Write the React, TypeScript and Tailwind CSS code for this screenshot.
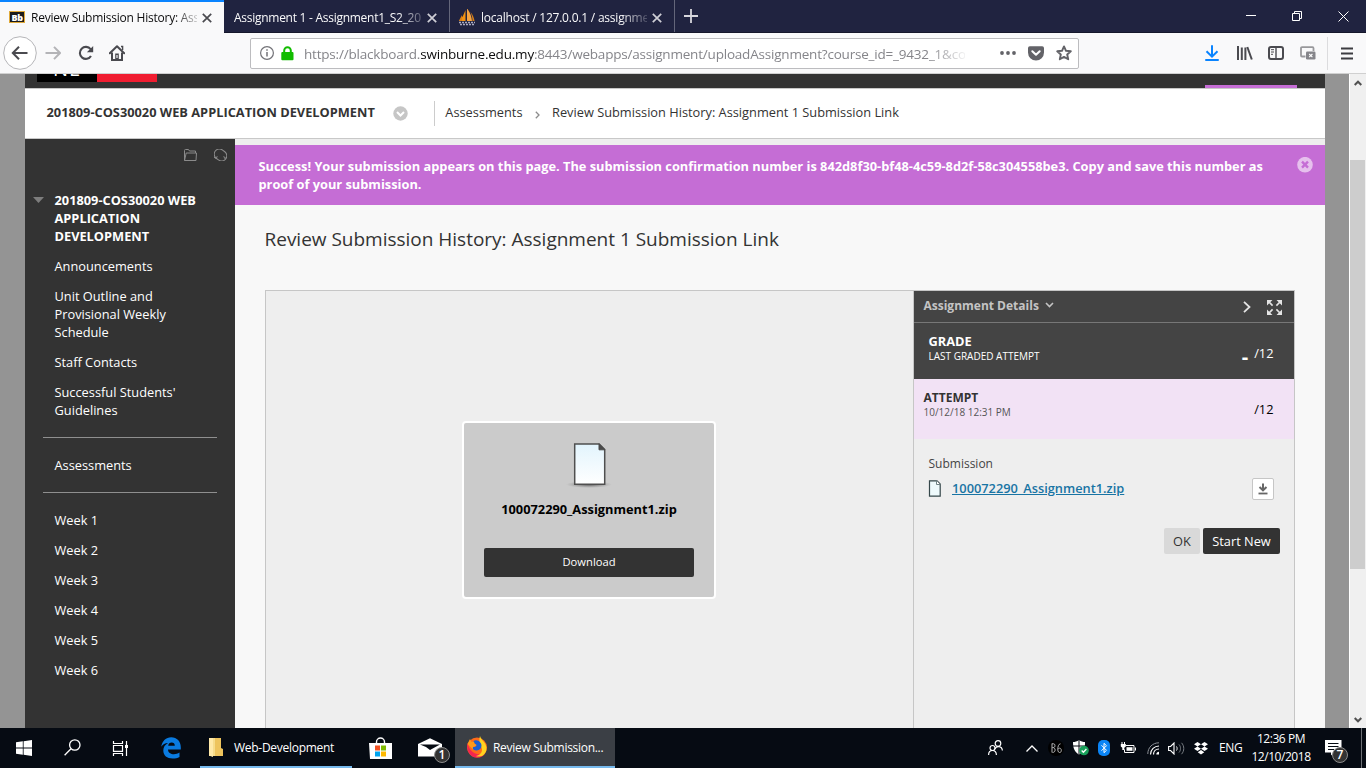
import type { ReactNode } from "react";

type IconProps = { w: number; h: number; className?: string; children: ReactNode };

function Icon({ w, h, className = "", children }: IconProps) {
  return (
    <svg width={w} height={h} viewBox={`0 0 ${w} ${h}`} fill="none" className={`block shrink-0 ${className}`}>
      {children}
    </svg>
  );
}

function CloseX({ color, className = "" }: { color: string; className?: string }) {
  return (
    <Icon w={10} h={10} className={className}>
      <path d="M.8.8l8.4 8.4M9.2.8L.8 9.2" stroke={color} strokeWidth="1.7" />
    </Icon>
  );
}

function TabBar() {
  return (
    <div className="flex h-[33px] w-full shrink-0 border-b border-[#15172b] bg-[#202340] text-[12px] leading-[18px]">
      <div className="flex h-[33px] w-[224px] shrink-0 items-center border-t-2 border-[#0a84ff] bg-[#f9f9fa] pl-[9px] text-[#0c0c0d]">
        <div className="-mt-px flex h-[12px] w-[16px] items-center justify-center border border-[#e0aa3a] bg-[#1b1b1b] font-['Noto_Sans'] text-[9px] font-black leading-none tracking-[-0.5px] text-white">
          Bb
        </div>
        <div className="ml-[6px] w-[166px] overflow-hidden whitespace-nowrap tracking-[-0.24px] [mask-image:linear-gradient(to_right,black_143px,transparent_172px)]">
          Review Submission History: Ass
        </div>
        <CloseX color="#4a4a4f" className="ml-[5px]" />
      </div>
      <div className="flex h-[32px] w-[226px] shrink-0 items-center border-r border-[#64667a] pl-[10px] pt-[3px] text-[#f9f9fa]">
        <div className="w-[188px] overflow-hidden whitespace-nowrap tracking-[-0.27px] [mask-image:linear-gradient(to_right,black_164px,transparent_196px)]">
          Assignment 1 - Assignment1_S2_20
        </div>
        <CloseX color="#cfcfd6" className="ml-[5px]" />
      </div>
      <div className="flex h-[32px] w-[225px] shrink-0 items-center border-r border-[#64667a] pl-[8px] pt-[3px] text-[#f9f9fa]">
        <Icon w={18} h={17}>
          <path d="M7.500 1v11h-6C4 9 6 5 7.500 1z" fill="#f29111" />
          <path d="M9.500 0c3 4 4 8 4.500 12H9V0z" fill="#f7a440" />
          <path d="M4 6v6H.8L4 6zM12.500 3c2.500 3 3.500 6 4 9h-2c0-3-.8-6-2-9z" fill="#d97f16" />
          <path d="M1 13.500h16M2 15.500h14" stroke="#a9a9c0" strokeWidth="1.400" strokeDasharray="2 1" />
        </Icon>
        <div className="ml-[5px] w-[166px] overflow-hidden whitespace-nowrap tracking-[-0.22px] [mask-image:linear-gradient(to_right,black_140px,transparent_172px)]">
          localhost / 127.0.0.1 / assignme
        </div>
        <CloseX color="#cfcfd6" className="ml-[5px]" />
      </div>
      <Icon w={14} h={14} className="ml-[9px] mt-[9px]">
        <path d="M7 0v14M0 7h14" stroke="#d6d6dc" strokeWidth="1.8" />
      </Icon>
      <div className="ml-auto flex items-center pr-[17px]">
        <Icon w={10} h={10}>
          <path d="M0 4.500h10" stroke="#fff" />
        </Icon>
        <Icon w={10} h={10} className="ml-[36px]">
          <path d="M.5 2.500h7v7h-7zM2.500 2.500v-2h7v7h-2" stroke="#fff" />
        </Icon>
        <Icon w={11} h={11} className="ml-[36px]">
          <path d="M.5.5l10 10M10.500.5l-10 10" stroke="#fff" />
        </Icon>
      </div>
    </div>
  );
}

function Toolbar() {
  return (
    <div className="flex h-[41px] w-full shrink-0 items-center border-b border-[#d0d0d0] bg-[#f9f9fa] pl-[3px]">
      <Icon w={34} h={34}>
        <circle cx="17" cy="17" r="16.3" fill="#fff" stroke="#b5b5b8" />
        <path d="M24.5 17H10M16 10.8L9.8 17l6.2 6.2" stroke="#4a4a4f" strokeWidth="2" />
      </Icon>
      <Icon w={16} h={14} className="ml-[8px]">
        <path d="M.5 7H15M9 .9L15 7l-6 6.1" stroke="#b4b4b7" strokeWidth="2" />
      </Icon>
      <Icon w={16} h={16} className="ml-[17px]">
        <path d="M12.6 4.2A6 6 0 1 0 13 11" stroke="#4a4a4f" strokeWidth="2.1" />
        <path d="M15.2 1v6.3H8.9z" fill="#4a4a4f" />
      </Icon>
      <Icon w={16} h={16} className="ml-[15px]">
        <path d="M.8 8.2L8 1.2l7.2 7" stroke="#4a4a4f" strokeWidth="2" strokeLinejoin="round" strokeLinecap="round" />
        <path d="M3 7.5V15h10V7.5" stroke="#4a4a4f" strokeWidth="2" />
        <path d="M6.2 8.5h3.6V15H6.2z" fill="#4a4a4f" />
        <path d="M8 10v3" stroke="#f9f9fa" strokeWidth="1.2" />
        <path d="M12 1.5h1.6V5" stroke="#4a4a4f" strokeWidth="1.4" />
      </Icon>
      <div className="ml-[125px] flex h-[31px] w-[829px] shrink-0 items-center rounded-[2px] border border-[#bcbcbf] bg-white pl-[9px]">
        <Icon w={14} h={14}>
          <circle cx="7" cy="7" r="6.4" stroke="#737378" strokeWidth="1.2" />
          <path d="M7 6v4.500M7 3.300v1.500" stroke="#737378" strokeWidth="1.5" />
        </Icon>
        <Icon w={13} h={15} className="ml-[7px]">
          <path d="M3.200 7V4.500a3.300 3.300 0 0 1 6.600 0V7" stroke="#12bc00" strokeWidth="2" />
          <rect x=".3" y="6" width="12.200" height="8.200" rx="1" fill="#12bc00" />
        </Icon>
        <div className="ml-[10px] mt-px w-[661px] overflow-hidden whitespace-nowrap text-[13.5px] leading-[20px] tracking-[-0.2px] text-[#85858a] [mask-image:linear-gradient(to_right,black_625px,transparent_665px)]">
          https://blackboard.<span className="text-[#0c0c0d]">swinburne.edu.my</span>
          :8443/webapps/assignment/uploadAssignment?course_id=_9432_1&amp;co
        </div>
        <Icon w={16} h={4} className="ml-[35px]">
          <circle cx="2" cy="2" r="1.900" fill="#636368" />
          <circle cx="8" cy="2" r="1.900" fill="#636368" />
          <circle cx="14" cy="2" r="1.900" fill="#636368" />
        </Icon>
        <Icon w={16} h={15} className="ml-[12px]">
          <path d="M1.800.3h12.400A1.800 1.800 0 0 1 16 2v4.500a8 8 0 0 1-16 0V2A1.800 1.800 0 0 1 1.800.3z" fill="#636368" />
          <path d="M4.300 5.200L8 8.800l3.700-3.600" stroke="#fff" strokeWidth="2" strokeLinecap="round" strokeLinejoin="round" />
        </Icon>
        <Icon w={16} h={16} className="ml-[12px]">
          <path d="M8 1.400l2 4.400 4.800.5-3.600 3.200 1 4.800L8 11.900l-4.200 2.400 1-4.800L1.200 6.300 6 5.800z" stroke="#636368" strokeWidth="1.900" strokeLinejoin="round" />
        </Icon>
      </div>
      <Icon w={14} h={16} className="ml-[126px]">
        <path d="M7 .3v11M1.500 6.300L7 11.600l5.500-5.300" stroke="#0a84ff" strokeWidth="2" />
        <path d="M1 15h12" stroke="#0a84ff" strokeWidth="2" strokeLinecap="round" />
      </Icon>
      <Icon w={16} h={14} className="ml-[18px]">
        <path d="M1 0v14M4.800 1.500V14M8.400 1.500V14" stroke="#4a4a4f" strokeWidth="2" />
        <path d="M10.300 1l4.500 12.500" stroke="#4a4a4f" strokeWidth="2" />
      </Icon>
      <Icon w={16} h={14} className="ml-[15px]">
        <rect x="1" y="1" width="14" height="12" rx="2" stroke="#4a4a4f" strokeWidth="2" />
        <path d="M8 1v12" stroke="#4a4a4f" strokeWidth="1.400" />
        <path d="M3 3.700h3M3 6h3M3 8.300h2" stroke="#4a4a4f" />
      </Icon>
      <Icon w={16} h={14} className="ml-[16px]">
        <path d="M5.500 10.500H2a1 1 0 0 1-1-1V2.200a1 1 0 0 1 1-1h10.500a1 1 0 0 1 1 1V5" stroke="#98989b" strokeWidth="1.800" />
        <rect x="6" y="5.500" width="9.500" height="8" rx="1.200" fill="#85858a" />
        <path d="M9.200 8l3.200 3.200M12.400 8l-3.200 3.200" stroke="#fff" strokeWidth="1.100" />
      </Icon>
      <div className="ml-[11px] h-[33px] w-px bg-[#dcdcde]" />
      <Icon w={12} h={13} className="ml-[13px]">
        <path d="M0 1.500h12M0 6.500h12M0 11.500h12" stroke="#3c3c41" strokeWidth="2" />
      </Icon>
    </div>
  );
}

const topLinks = ["Announcements", "Unit Outline and Provisional Weekly Schedule", "Staff Contacts", "Successful Students' Guidelines"];
const weeks = ["Week 1", "Week 2", "Week 3", "Week 4", "Week 5", "Week 6"];

function Sidebar() {
  return (
    <div className="flex w-[210px] shrink-0 flex-col bg-[#333] text-[12.8px] leading-[18px] text-white">
      <div className="flex h-[32px] items-center justify-end gap-[17px] pr-[8px]">
        <Icon w={13} h={12}>
          <path d="M.5 11.500V1.500a1 1 0 0 1 1-1h3l1 1.500h6v2M.5 11.500h11.500l.5-7.500H2.200z" stroke="#8b8b8b" strokeLinejoin="round" />
        </Icon>
        <Icon w={13} h={12}>
          <path d="M2.200 9.300A5.200 5.200 0 0 1 8.600 1.100M10.800 2.700A5.200 5.200 0 0 1 4.400 10.900M10.800 2.700L8.600 1.100M2.200 9.300l2.200 1.600" stroke="#8b8b8b" strokeWidth="1.100" />
          <path d="M0 8.300l2.300 1.200.9-2.300M13 8.300l-2.300 1.200-.9-2.300" stroke="#8b8b8b" />
        </Icon>
      </div>
      <div className="mt-[20px] flex">
        <Icon w={11} h={6} className="ml-[8px] mt-[6px]">
          <path d="M0 0h11L5.500 6z" fill="#7d7d7d" />
        </Icon>
        <div className="ml-[10.500px] w-[160px] font-bold">201809-COS30020 WEB APPLICATION DEVELOPMENT</div>
      </div>
      <div className="mt-[12px] flex flex-col gap-[12px] pl-[29.5px] pr-[40px]">
        {topLinks.map((t) => (
          <div key={t}>{t}</div>
        ))}
      </div>
      <div className="mx-[18px] mt-[18px] h-px bg-[#8f8f8f]" />
      <div className="mt-[18px] pl-[29.5px]">Assessments</div>
      <div className="mx-[18px] mt-[18px] h-px bg-[#8f8f8f]" />
      <div className="mt-[18px] flex flex-col gap-[12px] pl-[29.5px]">
        {weeks.map((t) => (
          <div key={t}>{t}</div>
        ))}
      </div>
    </div>
  );
}

function FilePreview() {
  return (
    <div className="flex w-[647px] shrink-0 flex-col pl-[196px] pt-[130px]">
      <div className="flex h-[178px] w-[254px] flex-col items-center rounded-[4px] border-2 border-white bg-[#cbcbcb]">
        <svg width="46" height="46" viewBox="0 0 46 46" className="mt-[20px] block">
          <defs>
            <linearGradient id="sheet" x1="0" y1="0" x2="0" y2="1">
              <stop offset="0" stopColor="#e2f4fd" />
              <stop offset="1" stopColor="#fff" />
            </linearGradient>
            <radialGradient id="shade">
              <stop offset="0" stopColor="#555" />
              <stop offset="1" stopColor="#888" stopOpacity="0" />
            </radialGradient>
          </defs>
          <ellipse cx="23" cy="41.500" rx="23" ry="3.500" fill="url(#shade)" />
          <path d="M8.700 1h24.500l5.500 5.500v34.800h-30z" fill="url(#sheet)" stroke="#4f4f4f" strokeWidth="1.500" />
          <path d="M33 .8v6h6z" fill="#4a4a4a" stroke="#4a4a4a" />
        </svg>
        <div className="mt-[11px] text-[12.8px] font-bold leading-[18px] text-black">100072290_Assignment1.zip</div>
        <div className="mt-[30px] flex h-[29px] w-[210px] items-center justify-center rounded-[2px] bg-[#333] pb-px text-[11.2px] leading-[18px] text-white">
          Download
        </div>
      </div>
    </div>
  );
}

function Details() {
  return (
    <div className="flex w-[381px] shrink-0 flex-col border-l border-[#c6c6c6]">
      <div className="flex h-[32px] items-center border-b border-[#777] bg-[#444] pl-[9.5px] pr-[12px]">
        <div className="-mt-px text-[12px] font-bold leading-[18px] text-[#c4c4c4]">Assignment Details</div>
        <Icon w={9} h={6} className="-mt-[3px] ml-[6.500px]">
          <path d="M1 1l3.500 3.500L8 1" stroke="#c4c4c4" strokeWidth="1.600" />
        </Icon>
        <Icon w={8} h={12} className="ml-auto mt-px">
          <path d="M1 .8L6.500 6 1 11.200" stroke="#e4e4e4" strokeWidth="1.800" />
        </Icon>
        <Icon w={15} h={15} className="ml-[16px] mt-[2px]">
          <path d="M0 0h5.500L0 5.500zM15 0v5.500L9.500 0zM0 15V9.500L5.500 15zM15 15H9.500L15 9.500z" fill="#e4e4e4" />
          <path d="M2 2l3.600 3.600M13 2L9.400 5.600M2 13l3.600-3.600M13 13L9.400 9.400" stroke="#e4e4e4" strokeWidth="1.600" />
        </Icon>
      </div>
      <div className="flex h-[56px] justify-between bg-[#444] pl-[14.5px] pr-[20.500px] text-white">
        <div className="pt-[9px]">
          <div className="text-[12.8px] font-bold leading-[18px]">GRADE</div>
          <div className="text-[10px] leading-[12px]">LAST GRADED ATTEMPT</div>
        </div>
        <div className="flex gap-[6px] pt-[21px] text-[12.8px] leading-[18px]">
          <span className="mt-[4px] text-[20px] font-bold">-</span>
          <span>/12</span>
        </div>
      </div>
      <div className="flex h-[60px] justify-between bg-[#f2e2f5] pl-[9.5px] pr-[20.500px] text-[#333]">
        <div className="pt-[10px]">
          <div className="text-[12px] font-bold leading-[18px]">ATTEMPT</div>
          <div className="-mt-px text-[10px] leading-[12px] text-[#555]">10/12/18 12:31 PM</div>
        </div>
        <div className="pt-[21px] text-[12.8px] leading-[18px] text-black">/12</div>
      </div>
      <div className="pl-[14.5px] pt-[16px] text-[12px] leading-[18px] text-[#444]">Submission</div>
      <div className="mt-[4px] flex h-[24px] items-center pl-[14px] pr-[20px]">
        <Icon w={16} h={17} className="-mt-[2px]">
          <path d="M1.500.8h7.500l3.200 3.200v12.200H1.500z" fill="#eefafc" stroke="#35474a" strokeWidth="1.200" />
          <path d="M8.500.8v3.700h3.700" fill="#fff" stroke="#6f8385" strokeWidth="1" />
        </Icon>
        <div className="-mt-[2px] ml-[8px] text-[12.8px] font-semibold leading-[18px] text-[#1874a4] underline">100072290_Assignment1.zip</div>
        <div className="ml-auto flex h-[22px] w-[22px] items-center justify-center rounded-[2px] border border-[#c6c6c6] bg-white">
          <Icon w={10} h={12}>
            <path d="M5 .5v6M1.500 4L5 7.300 8.500 4" stroke="#666" strokeWidth="2" />
            <path d="M.5 10.500h9" stroke="#666" strokeWidth="1.800" />
          </Icon>
        </div>
      </div>
      <div className="mt-[27px] flex justify-end gap-[3px] pr-[14px] text-[12.8px] leading-[18px]">
        <div className="flex h-[26px] w-[36px] items-center justify-center rounded-[2px] bg-[#d9d9d9] text-[#333]">OK</div>
        <div className="flex h-[26px] w-[77px] items-center justify-center rounded-[2px] bg-[#333] text-white">Start New</div>
      </div>
    </div>
  );
}

function Main() {
  return (
    <div className="flex min-w-0 flex-1 flex-col bg-[#f8f8f8]">
      <div className="h-[6px] shrink-0 bg-[#eee]" />
      <div className="flex h-[60px] shrink-0 justify-between bg-[#c56dd5] pl-[23.5px] pr-[12px] pt-[12px] text-white">
        <div className="w-[1015px] text-[12.8px] font-bold leading-[18px]">
          Success! Your submission appears on this page. The submission confirmation number is
          842d8f30-bf48-4c59-8d2f-58c304558be3. Copy and save this number as proof of your submission.
        </div>
        <Icon w={16} h={16}>
          <circle cx="8" cy="7.700" r="7.800" fill="#e6c0ed" />
          <path d="M5 4.700l6 6M11 4.700l-6 6" stroke="#c56dd5" strokeWidth="2.400" />
        </Icon>
      </div>
      <div className="mt-[21px] pl-[29.5px] text-[19px] leading-[26px] tracking-[-0.01px] text-[#333]">
        Review Submission History: Assignment 1 Submission Link
      </div>
      <div className="ml-[30px] mt-[38px] flex w-[1030px] flex-1 border border-b-0 border-[#c6c6c6] bg-[#eee]">
        <FilePreview />
        <Details />
      </div>
    </div>
  );
}

function Page() {
  return (
    <div className="flex h-[654px] w-full shrink-0 overflow-hidden bg-[#949494] pl-[25px]">
      <div className="flex w-[1300px] shrink-0 flex-col">
        <div className="flex h-[14px] shrink-0 bg-[#333] pl-[12px]">
          <div className="flex h-[8px] w-[60px] items-end justify-center overflow-hidden bg-black pb-[5px] text-[20px] leading-[16px] tracking-[1px] text-white">
            NE
          </div>
          <div className="h-[8px] w-[60px] bg-[#f01d30]" />
          <div className="ml-auto mr-[28px] mt-[11px] h-[3px] w-[92px] bg-[#c56dd5]" />
        </div>
        <div className="flex h-[51px] shrink-0 items-center border-y border-[#c8c8c8] bg-white pl-[21.5px] text-[12.8px] leading-[18px] text-[#333]">
          <div className="-mt-[3px] font-bold">201809-COS30020 WEB APPLICATION DEVELOPMENT</div>
          <Icon w={15} h={15} className="-mt-px ml-[18.500px]">
            <circle cx="7.500" cy="7.500" r="7.200" fill="#c6c6c6" />
            <path d="M4 6l3.500 3.500L11 6" stroke="#fff" strokeWidth="2" />
          </Icon>
          <div className="ml-[25.500px] h-[25px] w-px bg-[#ccc]" />
          <div className="-mt-[3px] ml-[10.500px]">Assessments</div>
          <Icon w={5} h={8} className="ml-[12.500px] mt-[2px]">
            <path d="M.8.8L4 4 .8 7.200" stroke="#8c8c8c" strokeWidth="1.300" />
          </Icon>
          <div className="-mt-[3px] ml-[12px]">Review Submission History: Assignment 1 Submission Link</div>
        </div>
        <div className="flex flex-1">
          <Sidebar />
          <Main />
        </div>
      </div>
      <div className="ml-auto flex h-full w-[17px] flex-col items-center border-l border-white bg-[#f0f0f0]">
        <Icon w={8} h={6} className="mt-[6px]">
          <path d="M.7 5L4 1.700 7.300 5" stroke="#505050" strokeWidth="2" />
        </Icon>
        <div className="mr-px mt-[74px] h-[409px] w-[15px] bg-[#cdcdcd]" />
        <Icon w={8} h={6} className="mb-[5px] mt-auto">
          <path d="M.7 1L4 4.300 7.300 1" stroke="#505050" strokeWidth="2" />
        </Icon>
      </div>
    </div>
  );
}

function Taskbar() {
  return (
    <div className="flex h-[40px] w-full shrink-0 items-center bg-[#060b13] text-[12px] leading-[16px] text-white">
      <Icon w={16} h={16} className="ml-[16px]">
        <path d="M0 2.300l6.800-1v6.300H0zM7.600 1.200L16 0v7.600H7.600zM0 8.400h6.800v6.300l-6.800-1zM7.600 8.400H16V16l-8.400-1.200z" fill="#fff" />
      </Icon>
      <Icon w={17} h={17} className="-mt-px ml-[32px]">
        <circle cx="10.800" cy="6" r="5.200" stroke="#fff" strokeWidth="1.300" />
        <path d="M7 9.800L.6 16.300" stroke="#fff" strokeWidth="1.300" />
      </Icon>
      <Icon w={17} h={15} className="ml-[30.500px]">
        <path d="M1.500 0v2.500h9V0M1.500 15v-2.500h9V15M1.500 4.500h9v5.800h-9z" stroke="#fff" strokeWidth="1.200" />
        <path d="M14.500 0v15" stroke="#fff" strokeWidth="1.200" />
        <path d="M13 4h3v3h-3z" fill="#fff" />
      </Icon>
      <Icon w={20} h={22} className="ml-[32.500px]">
        <path d="M.2 9.800C1.200 4 5 .3 10.200.3 16 .3 19.800 4.500 19.800 10.200v2.300H7c.2 3.300 2.700 4.700 5.900 4.700 2 0 3.900-.6 5.600-1.600v4.300c-1.900 1-4.200 1.600-6.900 1.600C6 21.500 2.300 18.500 2.300 13.500c0-3.300 1.700-5.900 4.800-7.500C3.900 6.200 1.700 7.500.2 9.800zM7.200 8.700h6.600c0-2-1.200-3.200-3.100-3.200-1.900 0-3.200 1.200-3.500 3.200z" fill="#0a7be0" />
      </Icon>
      <div className="ml-[19px] flex h-[40px] w-[152px] items-center border-b-2 border-[#76b9ed] pl-[9px]">
        <Icon w={14} h={19}>
          <path d="M0 0h8v18H0z" fill="#f7dc8b" />
          <path d="M6 0h6v10l2 1v7H6z" fill="#eec45d" />
          <path d="M0 0h4v19l-4-1.500z" fill="#ffe9a8" />
        </Icon>
        <span className="ml-[11px] mt-[2px] whitespace-nowrap tracking-[-0.28px]">Web-Development</span>
      </div>
      <Icon w={23} h={23} className="ml-[17px]">
        <path d="M7.500 9V5a4 4 0 0 1 8 0v4" stroke="#fff" strokeWidth="1.400" />
        <path d="M0 6h23v16H1z" fill="#fff" />
        <path d="M6 8.500h5v5H6z" fill="#f25022" />
        <path d="M12 8.500h5v5h-5z" fill="#7fba00" />
        <path d="M6 14.500h5v5H6z" fill="#00a4ef" />
        <path d="M12 14.500h5v5h-5z" fill="#ffb900" />
      </Icon>
      <div className="relative ml-[26px] h-[40px] w-[37px]">
        <Icon w={25} h={20} className="mt-[10px]">
          <path d="M0 6L12 .3 24 6v12.500H0z" fill="#fff" />
          <path d="M2 6.600h20L12 12 8 9z" fill="#060b13" />
        </Icon>
        <div className="absolute left-[16px] top-[19px] flex h-[16px] w-[16px] items-center justify-center rounded-full border border-[#8c8c8c] bg-[#333] text-[12px] font-semibold leading-none">
          1
        </div>
      </div>
      <div className="flex h-[40px] w-[160px] items-center border-b-2 border-[#76b9ed] bg-[#3b3f45] pl-[11px]">
        <Icon w={22} h={22}>
          <circle cx="11" cy="11.500" r="10" fill="#ff6a1a" />
          <path d="M1.500 7C0 13 3 21.500 11 21.700c4 0 7-2 8.500-5C15 20 4 19 1.500 7z" fill="#f5254e" />
          <path d="M14 0c1 3 2.500 4 4 6 3.500 4.500 3.500 10-1 13.500-3 1.800-6 1-7 .5 5-1 7-5 5.500-8.500C14 8 12.500 5 14 0z" fill="#ffd21f" />
          <path d="M7 5.500C9 3.500 13 4 15 7.500c1.500 3-.5 7-4.500 7-2.500 0-4-1.500-4-3.500l3-.5c1 0 1.500-1.500 0-2z" fill="#1b5fd0" />
          <path d="M1.500 8L4 3l1.500 3L8 5.500 8.500 8l2 .8L9 10.500c-2 0-2.500 1-2 3z" fill="#ff9a1a" />
        </Icon>
        <span className="ml-[5px] mt-[2px] whitespace-nowrap tracking-[-0.3px]">Review Submission...</span>
      </div>
      <div className="ml-auto flex h-[40px] items-center">
        <Icon w={15} h={15} className="-mt-px">
          <circle cx="10" cy="3.500" r="2.800" stroke="#fff" strokeWidth="1.200" />
          <path d="M7 9c1-3.500 7-3.500 7.400 1.500" stroke="#fff" strokeWidth="1.200" />
          <circle cx="4.500" cy="8" r="2.500" stroke="#fff" strokeWidth="1.200" />
          <path d="M.6 15c0-6 7.600-6 7.800 0" stroke="#fff" strokeWidth="1.200" />
        </Icon>
        <Icon w={12} h={7} className="ml-[23px]">
          <path d="M.5 6.500L6 1l5.500 5.500" stroke="#fff" strokeWidth="1.300" />
        </Icon>
        <div className="ml-[10px] flex h-[16px] w-[16px] items-center justify-center rounded-full bg-black">
          <Icon w={11} h={10}>
            <path d="M1 .5v9M1 .8h1.500c2 0 2 3.700-.2 3.700H1.500c3.500 0 3.500 5 0 5M9.500.8C7.500 1 6.800 3.500 6.800 6.500c0 4 3.500 4 3.500.8 0-2.500-2.500-2.700-3.300-1" stroke="#b5b5b5" />
          </Icon>
        </div>
        <Icon w={16} h={16} className="ml-[9px]">
          <path d="M0 2c2 0 4-.5 6-2 2 1.500 4 2 6 2 .3 6-1.500 10-6 12.500C1.500 12 0 8 0 2z" fill="#fff" />
          <path d="M6 0v14M0 6h12" stroke="#060b13" />
          <circle cx="11" cy="10.500" r="4.800" fill="#18a05a" />
          <path d="M8.700 10.500l1.700 1.700 3-3.200" stroke="#fff" strokeWidth="1.300" />
        </Icon>
        <Icon w={12} h={16} className="ml-[9px]">
          <rect width="12" height="16" rx="5" fill="#0a84f5" />
          <path d="M3.500 5.300l5 5L6 12.700V3.300l2.500 2.400-5 5" stroke="#fff" />
        </Icon>
        <Icon w={16} h={12} className="-mt-px ml-[10px]">
          <path d="M5.500 3.500h8.500v7H4.500v-3" stroke="#fff" />
          <path d="M6.500 5.200h6v3.600h-6z" fill="#fff" />
          <path d="M15.500 5.500v3M2 0v2.500M4.500 0v2.500" stroke="#fff" />
          <path d="M.8 2h5v2.500L4.300 5.800V8h-2V5.800L.8 4.500z" fill="#fff" />
        </Icon>
        <Icon w={13} h={13} className="ml-[11px]">
          <path d="M.8 12C.8 5.500 5.500.8 12 .8" stroke="#8c9096" />
          <path d="M3.500 12.500c0-5 4-8.500 8.500-8.500M6.500 12.500C6.500 9 9 7 12 7" stroke="#fff" strokeWidth="1.200" />
          <path d="M9.300 12.500c0-1.700 1.200-2.700 2.700-2.700v2.700z" fill="#fff" />
        </Icon>
        <Icon w={17} h={13} className="ml-[8px]">
          <path d="M.6 4.500h2L6 1v11L2.600 8.500h-2z" stroke="#fff" strokeWidth="1.100" />
          <path d="M8.500 4.500c.8 1 .8 3 0 4" stroke="#fff" />
          <path d="M11 2.500c2 2 2 6 0 8M13.500.8c3 3.200 3 8.200 0 11.400" stroke="#777c82" />
        </Icon>
        <Icon w={14} h={13} className="ml-[9px]">
          <path d="M3.500 0L7 2.200 3.500 4.500 0 2.200zM10.500 0L14 2.200l-3.500 2.300L7 2.200zM3.500 4.500L7 6.800 3.500 9 0 6.800zM10.500 4.500L14 6.800 10.500 9 7 6.800zM7 8l3.300 2.200L7 12.500l-3.300-2.300z" fill="#fff" />
        </Icon>
        <span className="ml-[11px] w-[23px] tracking-[-0.4px]">ENG</span>
        <div className="ml-[9px] mr-px w-[60px] whitespace-nowrap text-center leading-[18px] tracking-[-0.45px]">
          <div>12:36 PM</div>
          <div>12/10/2018</div>
        </div>
        <div className="relative ml-[13px] h-[40px] w-[26px]">
          <Icon w={17} h={16} className="mt-[12px]">
            <path d="M0 0h16.500v12.500H9l-3 3v-3H0z" fill="#fff" />
            <path d="M3 3.500h10.500M3 6.500h10.500M3 9.500h6" stroke="#060b13" />
          </Icon>
          <div className="absolute left-[7px] top-[19px] flex h-[16px] w-[16px] items-center justify-center rounded-full border border-[#8c8c8c] bg-[#333] text-[12px] font-semibold leading-none">
            7
          </div>
        </div>
        <div className="ml-[10px] mr-[4px] h-[40px] w-px bg-[#6d7075]" />
      </div>
    </div>
  );
}

export default function App() {
  return (
    <div className="flex h-[768px] w-[1366px] flex-col overflow-hidden font-['Open_Sans','Noto_Sans',sans-serif]">
      <TabBar />
      <Toolbar />
      <Page />
      <Taskbar />
    </div>
  );
}
